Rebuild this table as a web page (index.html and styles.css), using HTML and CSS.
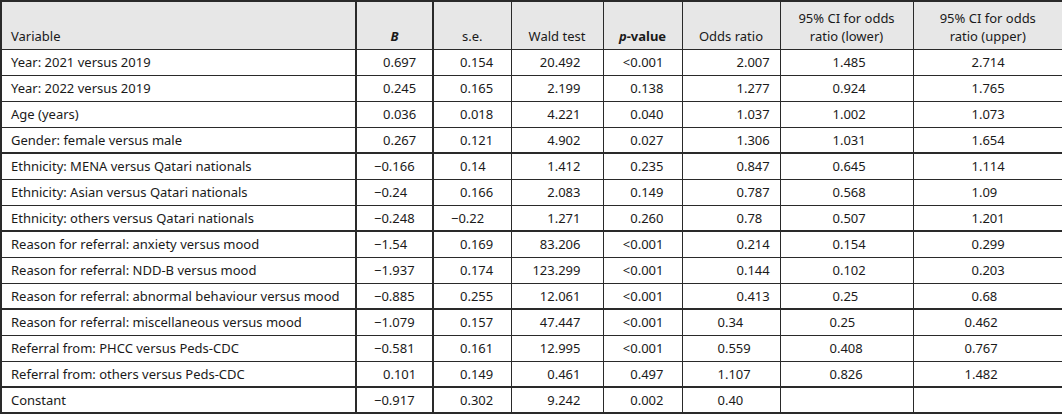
FILE: index.html
```html
<!DOCTYPE html>
<html>
<head>
<meta charset="utf-8">
<link rel="stylesheet" href="styles.css">
</head>
<body>
<table class="tbl">
  <colgroup>
    <col class="w-var"><col class="w-b"><col class="w-se"><col class="w-wald"><col class="w-p"><col class="w-or"><col class="w-lo"><col class="w-up">
  </colgroup>
  <thead>
    <tr class="head">
      <th class="h-var">Variable</th>
      <th><b><i>B</i></b></th>
      <th>s.e.</th>
      <th>Wald test</th>
      <th><b><i>p</i>-value</b></th>
      <th>Odds ratio</th>
      <th>95% CI for odds<br>ratio (lower)</th>
      <th>95% CI for odds<br>ratio (upper)</th>
    </tr>
  </thead>
  <tbody>
    <tr><td class="var">Year: 2021 versus 2019</td><td class="cb pos">0.697</td><td class="cse pos">0.154</td><td class="cw">20.492</td><td class="cp">&lt;0.001</td><td class="cor">2.007</td><td class="clo">1.485</td><td class="cup">2.714</td></tr>
    <tr><td class="var">Year: 2022 versus 2019</td><td class="cb pos">0.245</td><td class="cse pos">0.165</td><td class="cw">2.199</td><td class="cp">0.138</td><td class="cor">1.277</td><td class="clo">0.924</td><td class="cup">1.765</td></tr>
    <tr><td class="var">Age (years)</td><td class="cb pos">0.036</td><td class="cse pos">0.018</td><td class="cw">4.221</td><td class="cp">0.040</td><td class="cor">1.037</td><td class="clo">1.002</td><td class="cup">1.073</td></tr>
    <tr class="grp"><td class="var">Gender: female versus male</td><td class="cb pos">0.267</td><td class="cse pos">0.121</td><td class="cw">4.902</td><td class="cp">0.027</td><td class="cor">1.306</td><td class="clo">1.031</td><td class="cup">1.654</td></tr>
    <tr><td class="var">Ethnicity: MENA versus Qatari nationals</td><td class="cb">−0.166</td><td class="cse pos">0.14</td><td class="cw">1.412</td><td class="cp">0.235</td><td class="cor">0.847</td><td class="clo">0.645</td><td class="cup">1.114</td></tr>
    <tr><td class="var">Ethnicity: Asian versus Qatari nationals</td><td class="cb">−0.24</td><td class="cse pos">0.166</td><td class="cw">2.083</td><td class="cp">0.149</td><td class="cor">0.787</td><td class="clo">0.568</td><td class="cup">1.09</td></tr>
    <tr class="grp"><td class="var">Ethnicity: others versus Qatari nationals</td><td class="cb">−0.248</td><td class="cse">−0.22</td><td class="cw">1.271</td><td class="cp">0.260</td><td class="cor">0.78</td><td class="clo">0.507</td><td class="cup">1.201</td></tr>
    <tr><td class="var">Reason for referral: anxiety versus mood</td><td class="cb">−1.54</td><td class="cse pos">0.169</td><td class="cw">83.206</td><td class="cp">&lt;0.001</td><td class="cor">0.214</td><td class="clo">0.154</td><td class="cup">0.299</td></tr>
    <tr><td class="var">Reason for referral: NDD-B versus mood</td><td class="cb">−1.937</td><td class="cse pos">0.174</td><td class="cw">123.299</td><td class="cp">&lt;0.001</td><td class="cor">0.144</td><td class="clo">0.102</td><td class="cup">0.203</td></tr>
    <tr class="grp"><td class="var">Reason for referral: abnormal behaviour versus mood</td><td class="cb">−0.885</td><td class="cse pos">0.255</td><td class="cw">12.061</td><td class="cp">&lt;0.001</td><td class="cor">0.413</td><td class="clo">0.25</td><td class="cup">0.68</td></tr>
    <tr class="late"><td class="var">Reason for referral: miscellaneous versus mood</td><td class="cb">−1.079</td><td class="cse pos">0.157</td><td class="cw">47.447</td><td class="cp">&lt;0.001</td><td class="cor">0.34</td><td class="clo">0.25</td><td class="cup">0.462</td></tr>
    <tr class="late"><td class="var">Referral from: PHCC versus Peds-CDC</td><td class="cb">−0.581</td><td class="cse pos">0.161</td><td class="cw">12.995</td><td class="cp">&lt;0.001</td><td class="cor">0.559</td><td class="clo">0.408</td><td class="cup">0.767</td></tr>
    <tr class="late grp"><td class="var">Referral from: others versus Peds-CDC</td><td class="cb pos">0.101</td><td class="cse pos">0.149</td><td class="cw">0.461</td><td class="cp">0.497</td><td class="cor">1.107</td><td class="clo">0.826</td><td class="cup">1.482</td></tr>
    <tr class="late"><td class="var">Constant</td><td class="cb">−0.917</td><td class="cse pos">0.302</td><td class="cw">9.242</td><td class="cp">0.002</td><td class="cor">0.40</td><td class="clo"></td><td class="cup"></td></tr>
  </tbody>
</table>
</body>
</html>
```
FILE: styles.css
```css
html, body {
  margin: 0;
  padding: 0;
  background: #ffffff;
}

body {
  font-family: "Noto Sans", "Open Sans", sans-serif;
  font-size: 13px;
  color: #1a1a1a;
}

.tbl {
  width: 1062px;
  table-layout: fixed;
  border-collapse: collapse;
  border: 2px solid #2a2a2a;
}

.w-var { width: 355px; }
.w-b { width: 77px; }
.w-se { width: 78px; }
.w-wald { width: 92px; }
.w-p { width: 79px; }
.w-or { width: 98px; }
.w-lo { width: 133px; }
.w-up { width: 150px; }

.tbl th,
.tbl td {
  border: 1px solid #2a2a2a;
  padding: 0;
  white-space: nowrap;
  overflow: hidden;
}

.tbl td:nth-child(2),
.tbl th:nth-child(2),
.tbl td:nth-child(3),
.tbl th:nth-child(3) {
  border-left-width: 2px;
}

.head {
  height: 48px;
  background: #e7e7e7;
}

.head th {
  font-weight: normal;
  text-align: center;
  vertical-align: bottom;
  padding: 0 4px 4px;
  line-height: 18px;
}

.head th.h-var {
  text-align: left;
  padding-left: 9px;
}

.tbl tbody tr {
  height: 26px;
}

.tbl tbody tr.grp td {
  border-bottom-width: 2px;
}

.tbl td {
  vertical-align: middle;
  line-height: 18px;
}

.var {
  padding-left: 9px !important;
}

.cb, .cse {
  text-align: left;
  padding-left: 17px !important;
}

.cb.pos, .cse.pos {
  padding-left: 26px !important;
}

.cw {
  text-align: right;
  padding-right: 22px !important;
}

.cp {
  text-align: right;
  padding-right: 18px !important;
}

.cor {
  padding-left: 54px !important;
}

.clo {
  padding-left: 52px !important;
}

.cup {
  padding-left: 58px !important;
}

.late .cor {
  padding-left: 35px !important;
}

.late .clo {
  padding-left: 49px !important;
}

.late .cup {
  padding-left: 51px !important;
}
```
